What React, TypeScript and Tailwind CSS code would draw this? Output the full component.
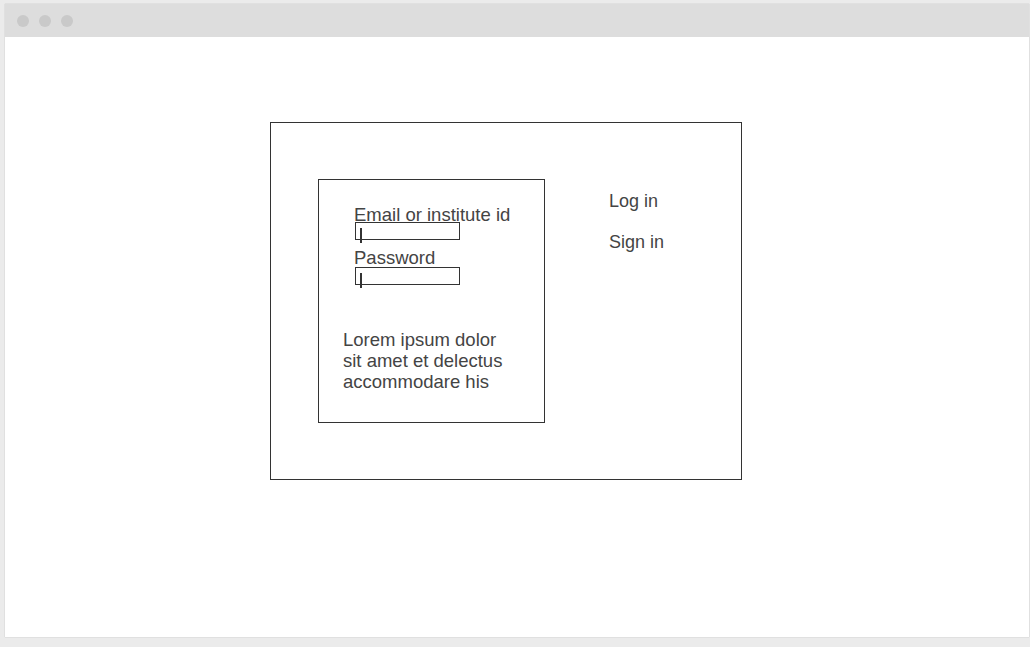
import React from "react";

const font = { fontFamily: '"Liberation Sans", Arial, sans-serif' };

function Field({ label, className, inputGap }: { label: string; className?: string; inputGap: string }) {
  return (
    <div className={className}>
      <p className="text-[18.5px] leading-[15px] text-[#444]">{label}</p>
      <div className={`relative ml-px h-[18px] w-[105px] border border-[#333] ${inputGap}`}>
        {/* caret */}
        <span className="absolute left-[4px] top-[5px] h-[15px] w-[2px] bg-[#333]" />
      </div>
    </div>
  );
}

export default function App() {
  return (
    <div className="h-[647px] w-[1030px] bg-[#ebebeb] pl-[5px] pt-[4px]" style={font}>
      <div className="flex h-[633px] w-[1024px] flex-col bg-white shadow-[0_0_1px_rgba(0,0,0,0.25)]">
        {/* Title bar */}
        <div className="flex h-[33px] items-center gap-[10px] bg-[#dddddd] pl-[12px]">
          <span className="h-[12px] w-[12px] rounded-full bg-[#c9c9c9]" />
          <span className="h-[12px] w-[12px] rounded-full bg-[#c9c9c9]" />
          <span className="h-[12px] w-[12px] rounded-full bg-[#c9c9c9]" />
        </div>

        {/* Content */}
        <div className="pl-[265px] pt-[85px]">
          <div className="flex h-[358px] w-[472px] border border-[#333] pl-[47px] pt-[56px]">
            <div className="h-[244px] w-[227px] border border-[#333] pt-[27px]">
              <div className="pl-[35px]">
                <Field label="Email or institute id" inputGap="mt-0" />
                <Field label="Password" className="mt-[10px]" inputGap="mt-[2px]" />
              </div>
              <p className="mt-[44px] w-[190px] pl-[24px] text-[18.5px] leading-[21px] text-[#444]">
                Lorem ipsum dolor sit amet et delectus accommodare his
              </p>
            </div>
            <div className="ml-[64px] flex flex-col gap-[20px] pt-[12px] text-[18px] leading-[21px] text-[#444]">
              <span>Log in</span>
              <span>Sign in</span>
            </div>
          </div>
        </div>
      </div>
    </div>
  );
}
